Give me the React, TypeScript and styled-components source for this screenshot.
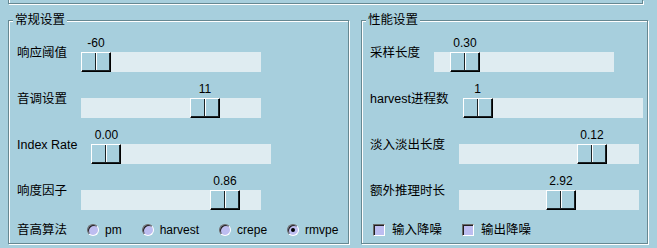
import React from 'react';
import styled, { createGlobalStyle, css } from 'styled-components';

const BG = '#a7cfdd';
const TRACK = '#dfecf1';
const SHADOW = '#668892';
const LAV = '#bdbdf0';

const Global = createGlobalStyle`
  html, body { margin: 0; padding: 0; background: ${BG}; }
  body { font-family: "Liberation Sans", "Noto Sans CJK SC", sans-serif; color: #000; }
`;

const etched = css`
  border: 1px solid ${SHADOW};
  box-shadow: inset 1px 1px 0 #fff, 1px 1px 0 #fff;
`;

const Page = styled.div`
  width: 657px;
  height: 248px;
  overflow: hidden;
  padding-left: 8px;
  box-sizing: border-box;
  background: ${BG};
`;

const TopFrame = styled.div`
  width: 635px;
  height: 4px;
  box-sizing: border-box;
  border: 1px solid ${SHADOW};
  border-top: none;
  box-shadow: inset 1px 0 0 #fff, 1px 1px 0 #fff;
`;

const GroupRow = styled.div`
  display: flex;
  gap: 12px;
  margin-top: 16px;
`;

const GroupBox = styled.div<{ $w: number }>`
  position: relative;
  box-sizing: border-box;
  width: ${(p) => p.$w}px;
  height: 224px;
  ${etched};
  padding: 14px 8px 0;
  display: flex;
  flex-direction: column;
  gap: 9px;
`;

const GroupTitle = styled.div`
  position: absolute;
  top: -8px;
  left: 4px;
  padding: 0 2px;
  background: ${BG};
  font-size: 12.5px;
  line-height: 15px;
  white-space: nowrap;
`;

const SliderRow = styled.div`
  display: flex;
  align-items: center;
  gap: 14px;
`;

const RowLabel = styled.div`
  font-size: 12.5px;
  line-height: 15px;
  white-space: nowrap;
`;

const Scale = styled.div`
  width: 180px;
  flex-shrink: 0;
  display: flex;
  flex-direction: column;
`;

const ValueArea = styled.div`
  position: relative;
  height: 17px;
`;

const ValueText = styled.span`
  position: absolute;
  top: 0;
  transform: translateX(-50%);
  font-family: "Liberation Sans", sans-serif;
  font-size: 12px;
  line-height: 17px;
  white-space: nowrap;
`;

const Track = styled.div`
  position: relative;
  height: 20px;
  background: ${TRACK};
`;

const Thumb = styled.div`
  position: absolute;
  top: 0;
  width: 30px;
  height: 20px;
  box-sizing: border-box;
  background: ${BG};
  border-top: 1px solid #fff;
  border-left: 1px solid #fff;
  border-right: 1px solid #000;
  border-bottom: 1px solid #000;
  box-shadow: inset -1px -1px 0 #1b2326;
  &::after {
    content: '';
    position: absolute;
    left: 13px;
    top: 0;
    bottom: 1px;
    width: 1px;
    background: #1b2326;
    box-shadow: 1px 0 0 #fff;
  }
`;

const OptionRow = styled.div`
  display: flex;
  align-items: center;
  height: 16px;
  margin-top: 3px;
  gap: 20px;
`;

const RadioItem = styled.div`
  display: flex;
  align-items: center;
  gap: 6px;
  font-family: "Liberation Sans", sans-serif;
  font-size: 12px;
  line-height: 15px;
`;

const RadioDot = styled.span<{ $on?: boolean }>`
  position: relative;
  width: 12px;
  height: 12px;
  box-sizing: border-box;
  border-radius: 50%;
  background: ${LAV};
  border: 1px solid;
  border-color: #6a6a6a #fff #fff #6a6a6a;
  box-shadow: inset 1px 1px 0 #202020;
  ${(p) =>
    p.$on &&
    css`
      &::after {
        content: '';
        position: absolute;
        left: 3px;
        top: 3px;
        width: 4px;
        height: 4px;
        border-radius: 50%;
        background: #000;
      }
    `}
`;

const CheckRow = styled(OptionRow)`
  padding-left: 3px;
`;

const CheckItem = styled.div`
  display: flex;
  align-items: center;
  gap: 7px;
  font-size: 12.5px;
  line-height: 15px;
`;

const CheckBox = styled.span`
  width: 12px;
  height: 12px;
  box-sizing: border-box;
  background: ${LAV};
  border: 1px solid;
  border-color: #6a6a6a #fff #fff #6a6a6a;
  box-shadow: inset 1px 1px 0 #202020;
`;

type SliderDef = { label: string; value: string; pos: number };

const leftSliders: SliderDef[] = [
  { label: '响应阈值', value: '-60', pos: 0 },
  { label: '音调设置', value: '11', pos: 109 },
  { label: 'Index Rate', value: '0.00', pos: 0 },
  { label: '响度因子', value: '0.86', pos: 129 },
];

const rightSliders: SliderDef[] = [
  { label: '采样长度', value: '0.30', pos: 16 },
  { label: 'harvest进程数', value: '1', pos: 0 },
  { label: '淡入淡出长度', value: '0.12', pos: 118 },
  { label: '额外推理时长', value: '2.92', pos: 87 },
];

const Slider = ({ label, value, pos }: SliderDef) => (
  <SliderRow>
    <RowLabel>{label}</RowLabel>
    <Scale>
      <ValueArea>
        <ValueText style={{ left: pos + 15 }}>{value}</ValueText>
      </ValueArea>
      <Track>
        <Thumb style={{ left: pos }} />
      </Track>
    </Scale>
  </SliderRow>
);

const methods = ['pm', 'harvest', 'crepe', 'rmvpe'];

export default function App() {
  return (
    <Page>
      <Global />
      <TopFrame />
      <GroupRow>
        <GroupBox $w={341}>
          <GroupTitle>常规设置</GroupTitle>
          {leftSliders.map((s) => (
            <Slider key={s.label} {...s} />
          ))}
          <OptionRow>
            <RowLabel>音高算法</RowLabel>
            {methods.map((m) => (
              <RadioItem key={m}>
                <RadioDot $on={m === 'rmvpe'} />
                {m}
              </RadioItem>
            ))}
          </OptionRow>
        </GroupBox>
        <GroupBox $w={287}>
          <GroupTitle>性能设置</GroupTitle>
          {rightSliders.map((s) => (
            <Slider key={s.label} {...s} />
          ))}
          <CheckRow>
            <CheckItem>
              <CheckBox />
              输入降噪
            </CheckItem>
            <CheckItem>
              <CheckBox />
              输出降噪
            </CheckItem>
          </CheckRow>
        </GroupBox>
      </GroupRow>
    </Page>
  );
}
